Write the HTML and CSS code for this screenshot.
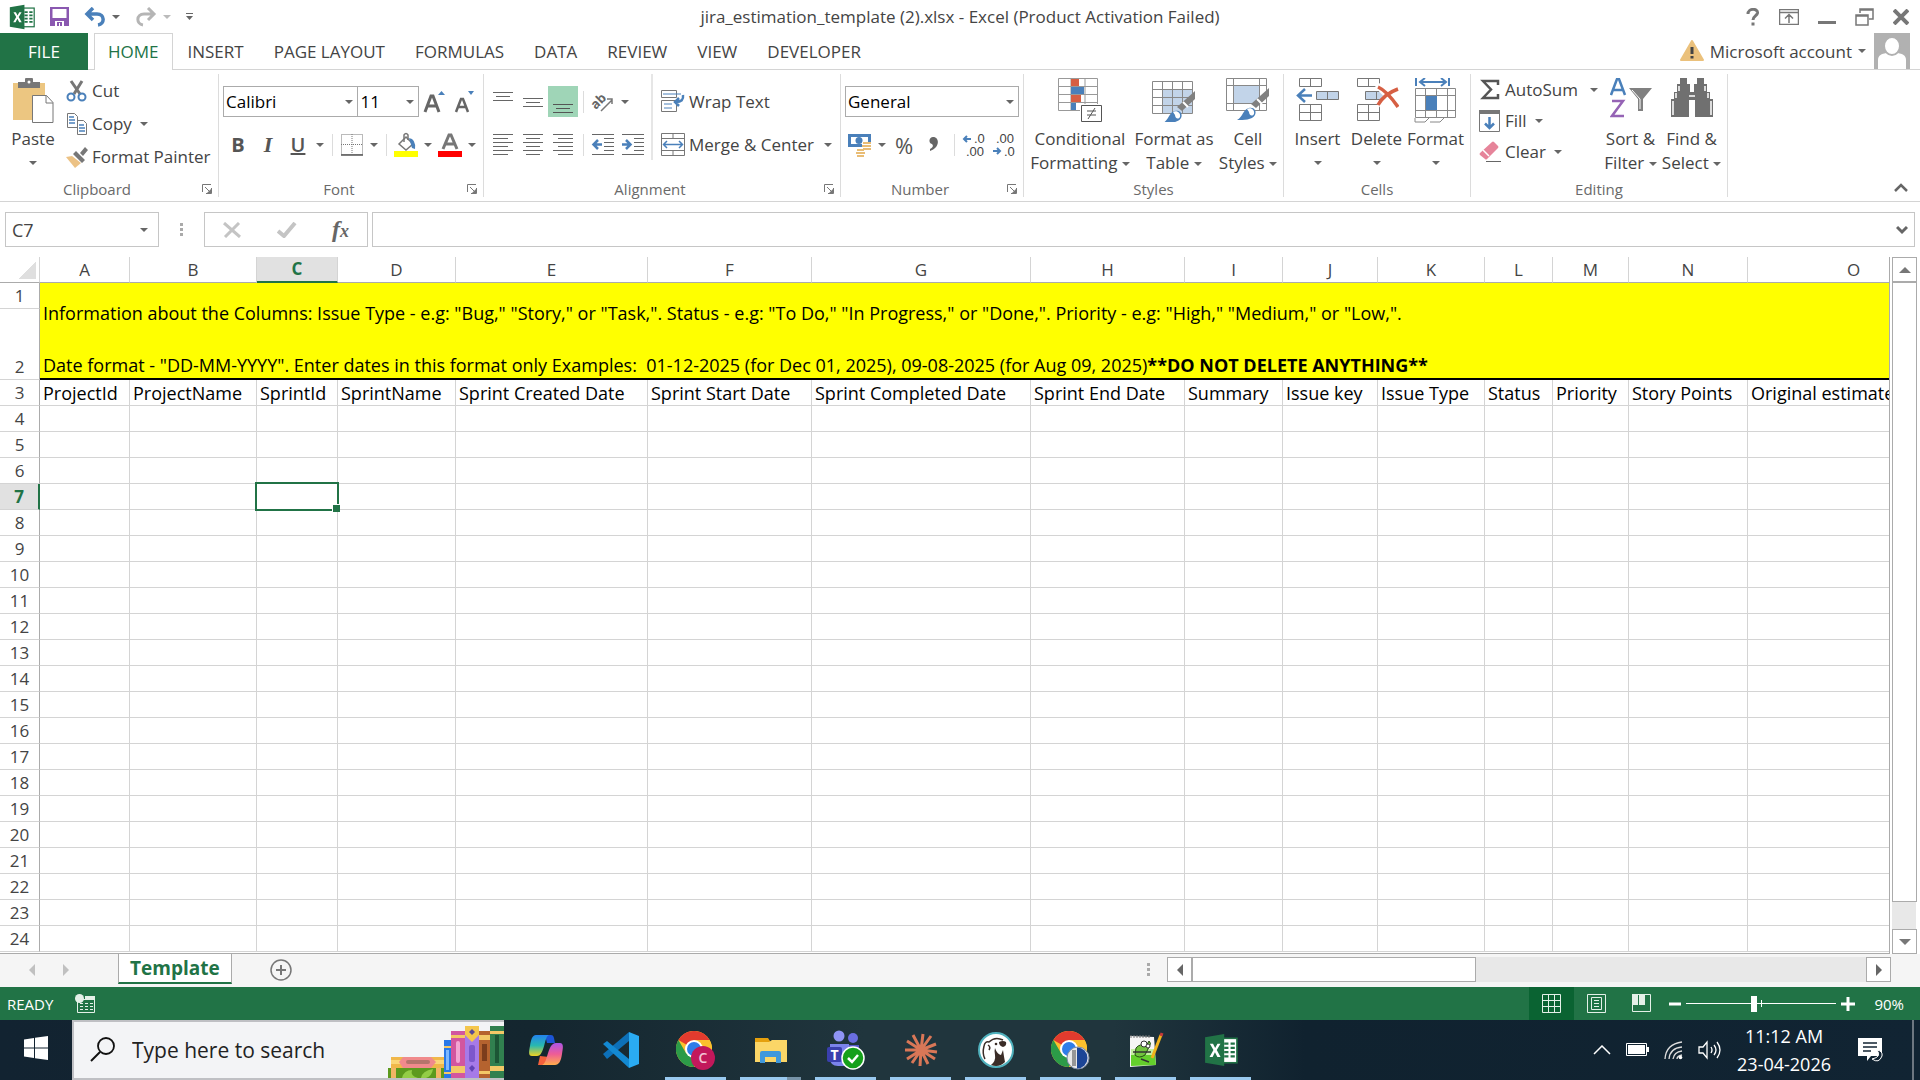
FILE: index.html
```html
<!DOCTYPE html>
<html lang="en">
<head>
    <meta charset="UTF-8">
    <meta name="viewport" content="width=device-width, initial-scale=1.0">
    <title>jira_estimation_template (2).xlsx - Excel</title>
    <link rel="stylesheet" href="styles.css">
</head>
<body>
    <!-- shared icons -->
    <svg class="sprite" aria-hidden="true">
        <symbol id="excel" viewBox="0 0 32 32">
            <rect x="17" y="5" width="14" height="23" fill="#fff" stroke="#217346" stroke-width="1.5"/>
            <path d="M19 9h4v2h-4zM25 9h4v2h-4zM19 13h4v2h-4zM25 13h4v2h-4zM19 17h4v2h-4zM25 17h4v2h-4zM19 21h4v2h-4zM25 21h4v2h-4z" fill="#217346"/>
            <path d="M1 4 19 1v30L1 28z" fill="#217346"/>
            <path d="M5.500 10h3l2 4 2.200-4h2.800l-3.500 6 3.600 6.500h-3l-2.300-4.300-2.200 4.300H5.200l3.700-6.400z" fill="#fff"/>
        </symbol>
        <symbol id="chrome" viewBox="0 0 36 36">
            <circle cx="18" cy="18" r="18" fill="#fbc02d"/>
            <path d="M18 18 2.400 9A18 18 0 0 1 33.600 9z" fill="#e33b2e"/>
            <path d="M2.400 9A18 18 0 0 0 18 36l7.800-13.500L10.200 22.500z" fill="#2c9b48"/>
            <path d="M18 9h15.600A18 18 0 0 1 18 36l8-13.500z" fill="#fbc02d"/>
            <circle cx="18" cy="18" r="9" fill="#fff"/>
            <circle cx="18" cy="18" r="7" fill="#2f7de9"/>
        </symbol>
        <symbol id="launcher" viewBox="0 0 10 10">
            <path d="M.5 8V.5H9M3 3l5 5M9.500 4v5.500H4" fill="none" stroke="#777"/>
            <path d="M9 5v4H5z" fill="#777"/>
        </symbol>
        <symbol id="brush" viewBox="0 0 34 34">
            <path d="M33 1v8L20 21l-5-4z" fill="#808080"/>
            <path d="m21 12 5 5" stroke="#fff" stroke-width="2"/>
            <path d="M1 33c6-3 6-11 12-12 5-1 8 3 6 7-3 5-11 5-18 5z" fill="#4a80ba"/>
            <path d="M11 22c4-2 8 1 7 5-2 3-5 1-5-2z" fill="#fff"/>
        </symbol>
    </svg>

    <header class="title-bar">
        <div class="quick-access">
            <svg width="26" height="26"><use href="#excel"/></svg>
            <button aria-label="Save"><svg width="19" height="19" viewBox="0 0 19 19"><path d="M0 0h19v19H0z" fill="#8a58b0"/><path d="M2.500 2h14v9h-14zM5 14h9v5H5z" fill="#fff"/><path d="M7 15h5v4h-2v-3H9v3H7z" fill="#8a58b0"/></svg></button>
            <button aria-label="Undo"><svg width="22" height="20" viewBox="0 0 22 20"><path d="M3 7h10c8 0 8 10 1 11M9 1 3 7l6 6" fill="none" stroke="#4a80ba" stroke-width="3.500"/></svg><i class="caret"></i></button>
            <button aria-label="Redo" class="off"><svg width="22" height="20" viewBox="0 0 22 20"><path d="M19 7H9C1 7 1 17 8 18M13 1l6 6-6 6" fill="none" stroke="#b5b5b5" stroke-width="3"/></svg><i class="caret"></i></button>
            <button aria-label="Customize"><svg width="8" height="8"><path d="M0 0h7v1H0zM0 3h7L3.500 7z" fill="#666"/></svg></button>
        </div>
        <h1>jira_estimation_template (2).xlsx - Excel (Product Activation Failed)</h1>
        <div class="window-buttons">
            <button aria-label="Help"><svg width="14" height="18" viewBox="0 0 14 18"><path d="M2 6c0-6 10-6 9.500-1C11 8 7 8 7 12M7 14.500v3" fill="none" stroke="#777" stroke-width="3"/></svg></button>
            <button aria-label="Ribbon display"><svg width="20" height="16" viewBox="0 0 20 16"><path d="M.5.500h19v15H.5zM.5 3.500h19M10 14V6M6 9.500l4-4 4 4" fill="none" stroke="#777" stroke-width="1.500"/></svg></button>
            <button aria-label="Minimize"><svg width="18" height="18" viewBox="0 0 18 18"><path d="M0 13h18v3H0z" fill="#777"/></svg></button>
            <button aria-label="Restore"><svg width="19" height="18" viewBox="0 0 19 18"><path d="M5 5V1h13v10h-4M1 7h12v10H1zM1 8h12M5 2h13" fill="none" stroke="#777" stroke-width="1.500"/></svg></button>
            <button aria-label="Close"><svg width="16" height="16" viewBox="0 0 16 16"><path d="m1 1 14 14M15 1 1 15" stroke="#777" stroke-width="4"/></svg></button>
        </div>
    </header>

    <nav class="tabs">
        <a class="file" href="#">FILE</a>
        <a class="active" href="#">HOME</a>
        <a href="#">INSERT</a>
        <a href="#">PAGE LAYOUT</a>
        <a href="#">FORMULAS</a>
        <a href="#">DATA</a>
        <a href="#">REVIEW</a>
        <a href="#">VIEW</a>
        <a href="#">DEVELOPER</a>
        <button class="account">
            <svg width="24" height="22" viewBox="0 0 24 22"><path d="M12 1 23 20H1z" fill="#ebc17c" stroke="#ebc17c" stroke-width="2" stroke-linejoin="round"/><path d="M12 7v7M12 16v2.500" stroke="#444" stroke-width="3"/></svg>
            Microsoft account <i class="caret"></i>
            <svg class="avatar" width="36" height="36" viewBox="0 0 36 36"><path d="M0 0h36v36H0z" fill="#b1b1b1"/><path d="M4 36V27c0-5 4-6 8-7h12c4 1 8 2 8 7v9z" fill="#fff"/><ellipse cx="18" cy="13" rx="8" ry="9" fill="#fff" stroke="#b1b1b1" stroke-width="2"/></svg>
        </button>
    </nav>

    <div class="ribbon">
        <section class="group clipboard">
            <div class="group-body">
                <button class="big">
                    <svg width="42" height="46" viewBox="0 0 42 46"><path d="M1 5h32v37H1z" fill="#ecc681"/><path d="M6 4h7V1q0-1 1-1h6q1 0 1 1v3h7v6H6z" fill="#777"/><circle cx="17" cy="4" r="1.500" fill="#fff"/><path d="M20.500 17.500h14l6.500 7v20H20.500z" fill="#fff" stroke="#777"/><path d="M34 17.500V25h7" fill="none" stroke="#777"/></svg>
                    <span>Paste</span><i class="caret"></i>
                </button>
                <div class="rows">
                    <button><svg width="22" height="22" viewBox="0 0 22 22"><path d="m5 1 9 13M16 1 8 14" stroke="#777" stroke-width="3"/><g fill="none" stroke="#4a80ba" stroke-width="2"><circle cx="5" cy="17" r="3.500"/><circle cx="16" cy="17" r="3.500"/></g></svg>Cut</button>
                    <button><svg width="22" height="24" viewBox="0 0 22 24"><path d="M1.500 1.500h7l3 3v11h-10zM11.500 8.500h6l3 3v11h-9z" fill="#fff" stroke="#777"/><path d="M3 5h5M3 8h6M3 11h6M13 13h5M13 16h6M13 19h6" stroke="#4a80ba" stroke-width="1.500"/></svg>Copy <i class="caret"></i></button>
                    <button><svg width="22" height="22" viewBox="0 0 22 22"><path d="m0 11 6-1 9 7-6 5z" fill="#ecc285"/><path d="m7 8 3-3 9 9-3 3zM14 7l5-6 3 3-5 6z" fill="#777"/></svg>Format Painter</button>
                </div>
            </div>
            <footer><span>Clipboard</span><button aria-label="Clipboard options"><svg width="10" height="10"><use href="#launcher"/></svg></button></footer>
        </section>

        <section class="group font">
            <div class="group-body stack">
                <div class="tools">
                    <span class="combo face"><select aria-label="Font"><option>Calibri</option></select></span>
                    <span class="combo size"><select aria-label="Font size"><option>11</option></select></span>
                    <button aria-label="Grow font"><svg width="22" height="24" viewBox="0 0 22 24"><path d="m2 22 6-16h2l6 16M4.500 16h9" fill="none" stroke="#666" stroke-width="3"/><path d="M15 5h7l-3.500-4z" fill="#4a80ba"/></svg></button>
                    <button aria-label="Shrink font"><svg width="22" height="24" viewBox="0 0 22 24"><path d="m3 22 5-13h2l5 13M5 17h8" fill="none" stroke="#666" stroke-width="2.500"/><path d="M15 1h6l-3 4z" fill="#4a80ba"/></svg></button>
                </div>
                <div class="tools">
                    <button class="letter bold">B</button>
                    <button class="letter italic">I</button>
                    <button class="letter underline">U</button>
                    <button class="drop" aria-label="Underline styles"><i class="caret"></i></button>
                    <i class="sep"></i>
                    <button aria-label="Borders"><svg width="22" height="22" viewBox="0 0 22 22"><path d="M.5.500h21v20H.5zM11 0v20M0 10.500h21" fill="none" stroke="#777" stroke-dasharray="1 1"/><path d="M0 21h22" stroke="#555" stroke-width="1.500"/></svg></button>
                    <button class="drop" aria-label="Border styles"><i class="caret"></i></button>
                    <i class="sep"></i>
                    <button aria-label="Fill color"><svg width="24" height="24" viewBox="0 0 24 24"><path d="m5 11 7-7 7 7-7 6z" fill="#fff" stroke="#777" stroke-width="1.500"/><path d="M10 9V2q2-3 4 0v5" fill="none" stroke="#777" stroke-width="1.500"/><path d="M15 5q7 1 6 11l-3-1z" fill="#4a80ba"/><path d="M0 18h24v6H0z" fill="#ff0"/></svg></button>
                    <button class="drop" aria-label="Fill colors"><i class="caret"></i></button>
                    <button aria-label="Font color"><svg width="24" height="24" viewBox="0 0 24 24"><path d="m5 16 6-14h2l6 14M8 11h8" fill="none" stroke="#777" stroke-width="3"/><path d="M0 18h24v6H0z" fill="red"/></svg></button>
                    <button class="drop" aria-label="Font colors"><i class="caret"></i></button>
                </div>
            </div>
            <footer><span>Font</span><button aria-label="Font options"><svg width="10" height="10"><use href="#launcher"/></svg></button></footer>
        </section>

        <section class="group alignment">
            <div class="group-body">
                <div class="stack divided">
                    <div class="tools">
                        <button aria-label="Top align"><svg width="20" height="24"><path d="M0 2.500h20M3 6.500h14M0 10.500h20" stroke="#666"/></svg></button>
                        <button aria-label="Middle align"><svg width="20" height="24"><path d="M0 8.500h20M3 12.500h14M0 16.500h20" stroke="#666"/></svg></button>
                        <button aria-label="Bottom align" class="on"><svg width="20" height="24"><path d="M0 14.500h20M3 18.500h14M0 22.500h20" stroke="#555"/></svg></button>
                        <i class="sep"></i>
                        <button aria-label="Orientation"><svg width="22" height="22" viewBox="0 0 22 22"><text x="0" y="14" transform="rotate(-45 8 12)" class="ab">ab</text><path d="M9 20 20 9M15 8h5v5" fill="none" stroke="#777" stroke-width="1.500"/></svg></button>
                        <button class="drop" aria-label="Orientation menu"><i class="caret"></i></button>
                    </div>
                    <div class="tools">
                        <button aria-label="Align left"><svg width="20" height="22"><path d="M0 .500h20M0 4.500h15M0 8.500h20M0 12.500h15M0 16.500h20M0 20.500h15" stroke="#666"/></svg></button>
                        <button aria-label="Center"><svg width="20" height="22"><path d="M0 .500h20M3 4.500h14M0 8.500h20M3 12.500h14M0 16.500h20M3 20.500h14" stroke="#666"/></svg></button>
                        <button aria-label="Align right"><svg width="20" height="22"><path d="M0 .500h20M5 4.500h15M0 8.500h20M5 12.500h15M0 16.500h20M5 20.500h15" stroke="#666"/></svg></button>
                        <i class="sep"></i>
                        <button aria-label="Decrease indent"><svg width="22" height="22"><path d="M0 .500h22M12 4.500h10M12 8.500h10M12 12.500h10M12 16.500h10M0 20.500h22" stroke="#666"/><path d="M10 10.500H2M6 6l-4.500 4.500L6 15" fill="none" stroke="#4a80ba" stroke-width="2.500"/></svg></button>
                        <button aria-label="Increase indent"><svg width="22" height="22"><path d="M0 .500h22M12 4.500h10M12 8.500h10M12 12.500h10M12 16.500h10M0 20.500h22" stroke="#666"/><path d="M0 10.500h8M4 6l4.500 4.500L4 15" fill="none" stroke="#4a80ba" stroke-width="2.500"/></svg></button>
                    </div>
                </div>
                <div class="stack wide">
                    <button><svg width="24" height="23" viewBox="0 0 24 23"><path d="M.5.500h15v7H.5zM.5 10.500h15v11H.5z" fill="#fff" stroke="#777"/><path d="M2 4h18M3 14h8M3 18h8" stroke="#4a80ba"/><path d="M22 5q1 7-7 7M18 8l-4 4 4 4" fill="none" stroke="#4a80ba" stroke-width="2.500"/></svg>Wrap Text</button>
                    <button><svg width="24" height="24" viewBox="0 0 24 24"><path d="M.5.500h23v22H.5zM.5 5.500h23M.5 17.500h23M12 0v5M12 18v5" fill="none" stroke="#777"/><path d="M3 11.500h18M6 8l-3.500 3.500L6 15M18 8l3.500 3.500L18 15" fill="none" stroke="#4a80ba" stroke-width="1.500"/></svg>Merge &amp; Center <i class="caret"></i></button>
                </div>
            </div>
            <footer><span>Alignment</span><button aria-label="Alignment options"><svg width="10" height="10"><use href="#launcher"/></svg></button></footer>
        </section>

        <section class="group number">
            <div class="group-body stack">
                <div class="tools">
                    <span class="combo format"><select aria-label="Number format"><option>General</option></select></span>
                </div>
                <div class="tools">
                    <button aria-label="Accounting format"><svg width="24" height="24" viewBox="0 0 24 24"><path d="M0 1h23v13H0z" fill="#4a80ba"/><path d="M3 4h17v7H3z" fill="#fff"/><circle cx="11" cy="7.500" r="3.500" fill="#4a80ba"/><path d="M14 9h9v9h-6v6H8v-8h6z" fill="#fff"/><path d="M15 10h8M14 13h9M15 16h8M9 17h7M8 20h9M9 23h7" stroke="#e9bd76" stroke-width="2"/></svg></button>
                    <button class="drop" aria-label="Currencies"><i class="caret"></i></button>
                    <button class="letter percent">%</button>
                    <button aria-label="Comma style"><svg width="10" height="16" viewBox="0 0 10 16"><path d="M4 0c7 0 7 11-3 14v-2c4-2 3-4 2-5-4-1-3-7 1-7z" fill="#666"/></svg></button>
                    <i class="sep"></i>
                    <button aria-label="Increase decimal"><svg width="24" height="26" viewBox="0 0 24 26"><text x="12" y="11" class="dec">.0</text><text x="4" y="24" class="dec">.00</text><path d="M9 7H2M5 4 2 7l3 3" fill="none" stroke="#4a80ba" stroke-width="2"/></svg></button>
                    <button aria-label="Decrease decimal"><svg width="24" height="26" viewBox="0 0 24 26"><text x="4" y="11" class="dec">.00</text><text x="12" y="24" class="dec">.0</text><path d="M1 19h7M5 16l3 3-3 3" fill="none" stroke="#4a80ba" stroke-width="2"/></svg></button>
                </div>
            </div>
            <footer><span>Number</span><button aria-label="Number options"><svg width="10" height="10"><use href="#launcher"/></svg></button></footer>
        </section>

        <section class="group styles">
            <div class="group-body">
                <button class="big">
                    <svg width="44" height="44" viewBox="0 0 44 44"><path d="M.5.500h39v32H.5zM13 0v33M27 0v33M0 8.500h40M0 16.500h40M0 24.500h40" fill="#fff" stroke="#999"/><path d="M13 1h8v7h-8zM13 17h10v7H13z" fill="#d65f43"/><path d="M13 9h13v7H13zM13 25h5v7h-5z" fill="#4a80ba"/><path d="M22 26h22v18H22z" fill="#fff"/><path d="M23.500 27.500h20v16h-20zM29 33h9M29 37h9M37 30l-7 11" fill="none" stroke="#555"/></svg>
                    <span>Conditional</span><span>Formatting <i class="caret"></i></span>
                </button>
                <button class="big">
                    <svg width="44" height="44" viewBox="0 0 44 44"><path d="M.5 3.500h40v32H.5z" fill="#fff"/><path d="M11 12h30v23H11z" fill="#c2d4e9"/><path d="M.5 3.500h40v32H.5zM10.500 3v32M20.500 3v32M30.500 3v32M0 11.500h40M0 19.500h40M0 27.500h40" fill="none" stroke="#888"/><use href="#brush" x="10" y="12" width="34" height="34"/></svg>
                    <span>Format as</span><span>Table <i class="caret"></i></span>
                </button>
                <button class="big">
                    <svg width="44" height="44" viewBox="0 0 44 44"><path d="M.5.500h40v32H.5zM7.500 0v32M33.500 0v32M0 7.500h40M0 25.500h40" fill="#fff" stroke="#888"/><path d="M8 8h25v17H8z" fill="#c2d4e9"/><use href="#brush" x="10" y="9" width="34" height="34"/></svg>
                    <span>Cell</span><span>Styles <i class="caret"></i></span>
                </button>
            </div>
            <footer><span>Styles</span></footer>
        </section>

        <section class="group cells">
            <div class="group-body">
                <button class="big">
                    <svg width="44" height="44" viewBox="0 0 44 44"><path d="M3.500.500h22v8h-22zM14.500 0v8M3.500 26.500h22v16h-22zM14.500 26v16M3 34.500h22" fill="#fff" stroke="#777"/><path d="M20.500 13.500h22v8h-22zM31.500 13v8" fill="#c2d4e9" stroke="#777"/><path d="M16 17.500H2M9 11l-7 6.500L9 24" fill="none" stroke="#4a80ba" stroke-width="2.500"/></svg>
                    <span>Insert</span><i class="caret"></i>
                </button>
                <button class="big">
                    <svg width="44" height="44" viewBox="0 0 44 44"><path d="M2.500.500h22v8h-22zM13.500 0v8M2.500 26.500h22v16h-22zM13.500 26v16M2 34.500h22" fill="#fff" stroke="#777"/><path d="M10.500 13.500h18v8h-18zM21.500 13v8" fill="#c2d4e9" stroke="#777"/><path d="M22 7 43 29M43 11 23 27" stroke="#fff" stroke-width="6"/><path d="M23 9q9 4 20 20M43 11q-14 5-20 16" fill="none" stroke="#d65f43" stroke-width="3.500"/></svg>
                    <span>Delete</span><i class="caret"></i>
                </button>
                <button class="big">
                    <svg width="44" height="46" viewBox="0 0 44 46"><path d="M2 0v8M35 0v8M6 4h26M11 0 6 4l5 4M27 0l5 4-5 4" fill="none" stroke="#4a80ba" stroke-width="2"/><path d="M1.500 10.500h40v29h-40zM11.500 10v29M22.500 10v29M33.500 10v29M1 17.500h40M1 32.500h40M1 40v4h10l4-4M16 44h10l4-4" fill="none" stroke="#888"/><path d="M12 18h11v14H12z" fill="#4a80ba"/></svg>
                    <span>Format</span><i class="caret"></i>
                </button>
            </div>
            <footer><span>Cells</span></footer>
        </section>

        <section class="group editing">
            <div class="group-body">
                <div class="rows">
                    <button><svg width="22" height="22" viewBox="0 0 22 22"><path d="M19 6V2H4l8 8.500L4 19h15v-4" fill="none" stroke="#555" stroke-width="2.500"/></svg>AutoSum <i class="caret far"></i></button>
                    <button><svg width="22" height="22" viewBox="0 0 22 22"><path d="M.5.500h20v21H.5z" fill="#fff" stroke="#777"/><path d="M0 0h21v4H0z" fill="#777"/><path d="M10.500 7v11M6 13.500l4.500 4.500 4.500-4.500" fill="none" stroke="#4a80ba" stroke-width="2.500"/></svg>Fill <i class="caret"></i></button>
                    <button><svg width="22" height="22" viewBox="0 0 22 22"><path d="M13 1q1-1 2 0l4 4q1 1 0 2L8 18q-1 1-2 0l-5-4q-1-1 0-2z" fill="#e6849a"/><path d="m4 9 6 6" stroke="#fff" stroke-width="1.500"/><path d="M7 20.500h15" stroke="#666"/></svg>Clear <i class="caret"></i></button>
                </div>
                <button class="big">
                    <svg width="42" height="40" viewBox="0 0 42 40"><path d="m1 17 6-16h2l6 16M3.500 12h9" fill="none" stroke="#4a80ba" stroke-width="2.500"/><path d="M2 23h11L2 38h12" fill="none" stroke="#9563b5" stroke-width="2.500"/><path d="M19 10h23L33 21v12h-5V21z" fill="#808080"/><path d="m22 12 8 9v10" fill="none" stroke="#fff"/></svg>
                    <span>Sort &amp;</span><span>Filter <i class="caret"></i></span>
                </button>
                <button class="big">
                    <svg width="42" height="40" viewBox="0 0 42 40"><path d="M9 0h7v6h3v8h4V6h3V0h7v6h3v8h3v7h3v18H24V22h-6v17H0V21h3v-7h3V6h3z" fill="#707070"/><path d="M2 23v14M5 15v5M8 8v5M40 23v14M37 15v5M34 8v5M18 18h6" stroke="#fff" stroke-width="1.500"/></svg>
                    <span>Find &amp;</span><span>Select <i class="caret"></i></span>
                </button>
            </div>
            <footer><span>Editing</span></footer>
        </section>
        <button class="collapse" aria-label="Collapse the ribbon"><svg width="14" height="10" viewBox="0 0 14 10"><path d="m1 8 6-6 6 6" fill="none" stroke="#666" stroke-width="2.500"/></svg></button>
    </div>

    <div class="formula-bar">
        <div class="name-box"><input type="text" value="C7" aria-label="Name box"><i class="caret"></i></div>
        <i class="dots"></i>
        <div class="formula-buttons">
            <button aria-label="Cancel"><svg width="18" height="16" viewBox="0 0 18 16"><path d="m1 1 16 14M16 1 2 15" stroke="#c4c4c4" stroke-width="3"/></svg></button>
            <button aria-label="Enter"><svg width="20" height="16" viewBox="0 0 20 16"><path d="m1 9 6 5L18 1" fill="none" stroke="#c4c4c4" stroke-width="4"/></svg></button>
            <button class="fx" aria-label="Insert function">f<small>x</small></button>
        </div>
        <div class="formula-box"><input type="text" aria-label="Formula"><svg width="12" height="10" viewBox="0 0 12 10"><path d="m1 2 5 5 5-5" fill="none" stroke="#666" stroke-width="3"/></svg></div>
    </div>

    <main class="workspace">
        <div class="sheet">
            <table>
                <colgroup>
                    <col class="w-head"><col class="w-a"><col class="w-b"><col class="w-c"><col class="w-d"><col class="w-e"><col class="w-f"><col class="w-g"><col class="w-h"><col class="w-i"><col class="w-j"><col class="w-k"><col class="w-l"><col class="w-m"><col class="w-n"><col class="w-o">
                </colgroup>
                <thead>
                    <tr><th class="corner"></th><th>A</th><th>B</th><th class="current">C</th><th>D</th><th>E</th><th>F</th><th>G</th><th>H</th><th>I</th><th>J</th><th>K</th><th>L</th><th>M</th><th>N</th><th>O</th></tr>
                </thead>
                <tbody id="rows">
                    <tr>
                        <th>1</th>
                        <td class="note" colspan="15" rowspan="2">Information about the Columns: Issue Type - e.g: "Bug," "Story," or "Task,". Status - e.g: "To Do," "In Progress," or "Done,". Priority - e.g: "High," "Medium," or "Low,".<br><br>Date format - "DD-MM-YYYY". Enter dates in this format only Examples:&nbsp; 01-12-2025 (for Dec 01, 2025), 09-08-2025 (for Aug 09, 2025)<b>**DO NOT DELETE ANYTHING**</b></td>
                    </tr>
                    <tr class="tall"><th>2</th></tr>
                    <tr><th>3</th><td>ProjectId</td><td>ProjectName</td><td>SprintId</td><td>SprintName</td><td>Sprint Created Date</td><td>Sprint Start Date</td><td>Sprint Completed Date</td><td>Sprint End Date</td><td>Summary</td><td>Issue key</td><td>Issue Type</td><td>Status</td><td>Priority</td><td>Story Points</td><td>Original estimate</td></tr>
                </tbody>
            </table>
        </div>
        <div class="scroll-y">
            <button aria-label="Scroll up"><i class="tri up"></i></button>
            <div class="thumb"></div>
            <button aria-label="Scroll down"><i class="tri down"></i></button>
        </div>
    </main>

    <div class="sheet-bar">
        <div class="sheet-nav"><button aria-label="Previous sheet"><i class="tri left"></i></button><button aria-label="Next sheet"><i class="tri right"></i></button></div>
        <a class="sheet-tab" href="#">Template</a>
        <button class="add" aria-label="New sheet"><svg width="22" height="22" viewBox="0 0 22 22"><circle cx="11" cy="11" r="10" fill="none" stroke="#777" stroke-width="1.500"/><path d="M11 6v10M6 11h10" stroke="#777" stroke-width="2"/></svg></button>
        <i class="dots"></i>
        <div class="scroll-x">
            <button aria-label="Scroll left"><i class="tri left"></i></button>
            <div class="thumb"></div>
            <button aria-label="Scroll right"><i class="tri right"></i></button>
        </div>
    </div>

    <div class="status-bar">
        <span>READY</span>
        <svg width="20" height="20" viewBox="0 0 20 20"><path d="M2.500 5.500h17v13h-17z" fill="none" stroke="#e4f0e8"/><path d="M10 2h10v4H10zM5 9h3v1H5zM10 9h3v1h-3zM15 9h3v1h-3zM5 12h3v1H5zM10 12h3v1h-3zM15 12h3v1h-3zM5 15h3v1H5zM10 15h3v1h-3zM15 15h3v1h-3z" fill="#e4f0e8"/><circle cx="4.500" cy="4.500" r="4.500" fill="#e4f0e8"/></svg>
        <div class="views">
            <button class="on" aria-label="Normal view"><svg width="20" height="20"><path d="M.5.500h18v18H.5zM6.500 0v19M12.500 0v19M0 6.500h19M0 12.500h19" fill="none" stroke="#e4f0e8"/></svg></button>
            <button aria-label="Page layout view"><svg width="20" height="20"><path d="M.5.500h18v18H.5zM4.500 3.500h10v12h-10zM7 6.500h5M7 9.500h5M7 12.500h5" fill="none" stroke="#e4f0e8"/></svg></button>
            <button aria-label="Page break view"><svg width="20" height="20"><path d="M.5.500h18v17H.5z" fill="none" stroke="#e4f0e8"/><path d="M0 0h6v11H0zM7 0h6v11H7z" fill="#e4f0e8"/></svg></button>
        </div>
        <button class="zoom-step" aria-label="Zoom out"><svg width="12" height="14"><path d="M0 7h12" stroke="#fff" stroke-width="3"/></svg></button>
        <input type="range" min="0" max="100" value="45" aria-label="Zoom">
        <button class="zoom-step" aria-label="Zoom in"><svg width="14" height="14"><path d="M0 7h14M7 0v14" stroke="#fff" stroke-width="3"/></svg></button>
        <span class="zoom">90%</span>
    </div>

    <footer class="taskbar">
        <button class="start" aria-label="Start"><svg width="24" height="24" viewBox="0 0 24 24"><path d="m0 3.400 10-1.400v9.500H0zM11 1.800 24 0v11.500H11zM0 12.500h10V22L0 20.600zM11 12.500h13V24l-13-1.800z" fill="#fff"/></svg></button>
        <div class="search">
            <svg width="26" height="26" viewBox="0 0 26 26"><circle cx="16" cy="9" r="8" fill="none" stroke="#111" stroke-width="1.800"/><path d="M10 15 1 24" stroke="#111" stroke-width="2"/></svg>
            <input type="text" placeholder="Type here to search" aria-label="Search">
            <svg class="books" width="116" height="52" viewBox="0 0 116 52">
                <path d="M3 31h53v11H3z" fill="#f0b74a"/><path d="M3 34h53v4H3z" fill="#fad678"/><path d="M15 31h28l5 5-5 6H15l-4-6z" fill="#f08a8c"/><rect x="18" y="34" width="24" height="4" rx="2" fill="#b5746c"/>
                <path d="M0 42h56v10H0z" fill="#5c9a1e"/><path d="M14 52q2-8 10-8-2 6 6 8zM33 52q1-7 12-9-1 7-7 9z" fill="#93cd47"/><path d="M3 42h5v10H3zM48 42h5v10h-5z" fill="#f2b565"/>
                <path d="M56 14h7v38h-7z" fill="#2878e8"/><path d="M56 20h7v2h-7zM56 46h7v2h-7z" fill="#f3c867"/><path d="M58 24h3v20h-3z" fill="#7db8ff"/>
                <path d="M63 5h14v47H63z" fill="#d2569f"/><path d="M63 9h14v3H63zM63 40h14v7H63z" fill="#f3c867"/><rect x="68" y="15" width="4" height="22" rx="2" fill="#f2a6d2"/>
                <path d="M77 0h14v52H77z" fill="#a67ae8"/><path d="M77 0h14v9l-7 7-7-7z" fill="#f4c64c"/><path d="m84 3 3 3-3 3-3-3z" fill="#5a4a96"/><rect x="81" y="19" width="6" height="17" rx="2" fill="#7d57cc"/><path d="m84 39 3 3-3 4-3-4z" fill="#6243b4"/>
                <path d="M91 5h11v47H91z" fill="#b5632f"/><path d="M91 9h11v5H91zM91 45h11v3H91z" fill="#f3c867"/><path d="M94 18h5v17h-5z" fill="#7c3d1c"/>
                <path d="M102 0h14v52h-14z" fill="#31804f"/><path d="M102 5h14v3h-14zM102 40h14v5h-14z" fill="#f3c867"/><path d="M107 9h4v28h-4z" fill="#1c5635"/>
            </svg>
        </div>
        <div class="apps">
            <button aria-label="Copilot"><svg width="36" height="36" viewBox="0 0 36 36">
                <defs>
                    <linearGradient id="cp1" x2="0" y2="1"><stop offset="0" stop-color="#2383ee"/><stop offset=".5" stop-color="#28b8b0"/><stop offset="1" stop-color="#f0d422"/></linearGradient>
                    <linearGradient id="cp2" x2="0" y2="1"><stop offset="0" stop-color="#ad55e8"/><stop offset=".5" stop-color="#ee5c96"/><stop offset="1" stop-color="#ffad4c"/></linearGradient>
                </defs>
                <path d="M17 3h6c3 0 3 3 4 8h-8z" fill="#1c55d6"/><path d="M10 33h7c3 0 3-5 4-8l-9-1z" fill="#f3603c"/>
                <path d="M8 3h13c-5 1-4 21-12 21H4c-4 0-3-5-2-10C3 8 4 3 8 3z" fill="url(#cp1)"/><path d="M28 11h4c4 0 3 5 2 11-1 7-3 11-7 11H14c6-1 5-22 14-22z" fill="url(#cp2)"/></svg></button>
            <button aria-label="Visual Studio Code"><svg width="36" height="36" viewBox="0 0 36 36"><path d="m0 22 26-22v9L4 27z" fill="#0d70b8"/><path d="m0 12 4-3 22 18v9z" fill="#1389d2"/><path d="m26 0 10 4v28l-10 4z" fill="#2aabf2"/></svg></button>
            <button class="open" aria-label="Chrome"><svg width="40" height="40" viewBox="0 0 40 40"><use href="#chrome" width="36" height="36" x="0" y="1"/><circle cx="27" cy="28" r="12" fill="#c2185b"/><text x="27" y="33" class="badge-c">C</text></svg></button>
            <button class="open split" aria-label="File Explorer"><svg width="36" height="36" viewBox="0 0 36 36"><path d="M2 6h13l2 3v4H2z" fill="#e5a00d"/><path d="M2 10h14l3-2h15v22H2z" fill="#fbd667"/><path d="M7 31V21q0-2 2-2h17q2 0 2 2v10h-5v-6H12v6z" fill="#3f98dc"/></svg></button>
            <button class="open" aria-label="Teams"><svg width="40" height="40" viewBox="0 0 40 40"><circle cx="13" cy="6" r="5.500" fill="#8f94f4"/><circle cx="27" cy="8" r="5" fill="#6a6ee0"/><path d="M4 14h19v22H12q-8 0-8-8z" fill="#7b83eb"/><path d="M23 15h10v15H23z" fill="#5558c8"/><rect x="1" y="17" width="15" height="15" rx="2" fill="#3a3fae"/><text x="8.500" y="30" class="badge-t">T</text><circle cx="27" cy="28" r="11" fill="#16a01b" stroke="#fff" stroke-width="1.500"/><path d="m22 28 4 4 6-7" fill="none" stroke="#fff" stroke-width="2.500"/></svg></button>
            <button class="open" aria-label="Claude"><svg width="34" height="34" viewBox="0 0 34 34"><path d="M17 17 9 2M17 17 19 1M17 17 27 3M17 17 32 11M17 17 33 19M17 17 31 26M17 17 24 31M17 17 16 33M17 17 8 30M17 17 3 26M17 17 1 17M17 17 3 8" stroke="#d97757" stroke-width="3"/></svg></button>
            <button class="open" aria-label="DBeaver"><svg width="36" height="36" viewBox="0 0 36 36"><circle cx="18" cy="18" r="17" fill="#fff" stroke="#50b1bd" stroke-width="2"/><path d="M6 14q1-5 5-4 6-6 14-2M6 14q-2 8 1 13M10 13q3 2 1 5" fill="none" stroke="#3a2c27" stroke-width="1.500"/><path d="M21 10q4-2 7 0 1 4-3 5-4-1-4-5z" fill="#3a2c27"/><circle cx="18" cy="12" r="1.300" fill="#3a2c27"/><path d="M13 33q5-4 4-10-1-4 0-7 2 6 6 7l2-5q1 7 2 12-6 6-14 3z" fill="#3a2c27"/></svg></button>
            <button class="open" aria-label="Chrome work profile"><svg width="40" height="40" viewBox="0 0 40 40"><use href="#chrome" width="36" height="36" x="0" y="1"/><circle cx="27" cy="28" r="11" fill="#e8e8e8" stroke="#7b8aa5"/><path d="M26 17.500a10.500 10.500 0 0 1 0 21z" fill="#1c4596"/><path d="M22 20v16M24 20v16" stroke="#444"/></svg></button>
            <button class="open" aria-label="Notepad++"><svg width="36" height="36" viewBox="0 0 36 36"><path d="m2 4 24 1 2 28-26 2z" fill="#f5f5f5"/><path d="M3 23h24l1 10-25 1z" fill="#64cf2c"/><path d="M3 17h23l1 6H3z" fill="#c4efa0"/><path d="M3 3v3M6 3v3M9 3v3M12 3v3M15 3v3M18 3v3M21 3v3" stroke="#777"/><path d="M8 16q4-5 10-2l3-5q3 2 0 6l-4 8q-6 4-10 0z" fill="#72c33f" stroke="#244b12"/><circle cx="16" cy="12" r="3" fill="#fff" stroke="#333"/><circle cx="20" cy="14" r="2" fill="#fff" stroke="#333"/><path d="M5 20h18M13 27l8 3" stroke="#333" stroke-width="1.500"/><path d="M33 3 24 26" stroke="#f1b31c" stroke-width="3"/><path d="m34 1-1 3" stroke="#c53a3a" stroke-width="3"/></svg></button>
            <button class="open" aria-label="Excel"><svg width="34" height="34"><use href="#excel"/></svg></button>
        </div>
        <div class="tray">
            <button aria-label="Hidden icons"><svg width="18" height="10"><path d="m1 9 8-8 8 8" fill="none" stroke="#fff" stroke-width="1.500"/></svg></button>
            <button aria-label="Battery"><svg width="23" height="14"><path d="M.5.500h20v12H.5z" fill="none" stroke="#fff"/><path d="M2 2h17v9H2zM21 4h2v5h-2z" fill="#fff"/></svg></button>
            <button aria-label="Wi-Fi"><svg width="19" height="19"><g fill="none" stroke="#ddd" stroke-width="1.300"><path d="M1 18Q2 3 18 1M5 18Q6 7 18 6M9 18Q10 11 18 10M13 18q0-3 5-4"/></g><circle cx="16.500" cy="16.500" r="1.800" fill="#fff"/></svg></button>
            <button aria-label="Volume"><svg width="24" height="20"><path d="M1 7h4l4-5v16l-4-5H1zM13 7q2 3 0 6M16 5q4 5 0 10M19 2q6 8 0 16" fill="none" stroke="#fff" stroke-width="1.300"/></svg></button>
            <button class="clock"><time>11:12 AM</time><time>23-04-2026</time></button>
            <button aria-label="Notifications"><svg width="26" height="26" viewBox="0 0 26 26"><path d="M0 1h24v18H13l-4 5v-5H0z" fill="#fff"/><path d="M5 6h14M5 10h14M5 14h8" stroke="#132433" stroke-width="1.500"/><path d="M19 13q5 7-5 9 7 5 10-3 1-5-5-6z" fill="#132433" stroke="#fff"/></svg></button>
        </div>
        <button class="show-desktop" aria-label="Show desktop"></button>
    </footer>

    <script>
        // fill the rest of the sheet with empty rows
        const rows = document.getElementById('rows');
        for (let r = 4; r <= 24; r++) {
            const tr = document.createElement('tr');
            const th = document.createElement('th');
            th.textContent = r;
            if (r === 7) th.className = 'current';
            tr.appendChild(th);
            for (let c = 0; c < 15; c++) {
                const td = document.createElement('td');
                if (r === 7 && c === 2) td.className = 'selected';
                tr.appendChild(td);
            }
            rows.appendChild(tr);
        }
    </script>
</body>
</html>
```
FILE: styles.css
```css
* {
    box-sizing: border-box;
}
body {
    margin: 0;
    height: 100vh;
    display: flex;
    flex-direction: column;
    overflow: hidden;
    background: #fff;
    color: #444;
    font-family: 'Open Sans', 'Noto Sans', sans-serif;
    font-size: 17px;
}
button, input, select {
    font: inherit;
    color: inherit;
    background: none;
    border: 0;
    border-radius: 0;
    padding: 0;
    margin: 0;
    outline: 0;
}
a {
    color: inherit;
    text-decoration: none;
}
svg {
    flex: none;
}
.sprite {
    position: absolute;
    width: 0;
    height: 0;
}
.caret {
    display: inline-block;
    flex: none;
    border: 4px solid transparent;
    border-top-color: #666;
    border-bottom: 0;
    vertical-align: middle;
}
.tri {
    display: block;
    border: 6px solid transparent;
}
.tri.up { border-bottom-color: #777; border-top: 0; }
.tri.down { border-top-color: #777; border-bottom: 0; }
.tri.left { border-right-color: #666; border-left: 0; }
.tri.right { border-left-color: #666; border-right: 0; }
.dots {
    width: 3px;
    height: 13px;
    background: repeating-linear-gradient(#aaa 0 3px, transparent 3px 5px);
}

/* title bar */
.title-bar {
    flex: none;
    display: grid;
    grid-template-columns: 1fr auto 1fr;
    align-items: center;
    height: 33px;
}
.title-bar h1 {
    margin: 0;
    font-size: 17px;
    line-height: 24px;
    font-weight: normal;
}
.quick-access {
    display: flex;
    align-items: center;
    gap: 15px;
    padding-left: 9px;
}
.quick-access button {
    display: flex;
    align-items: center;
    gap: 6px;
}
.off .caret {
    border-top-color: #bbb;
}
.window-buttons {
    display: flex;
    align-items: center;
    justify-content: flex-end;
    gap: 19px;
    padding-right: 11px;
}
.window-buttons button {
    display: flex;
}

/* tabs */
.tabs {
    flex: none;
    display: flex;
    height: 37px;
    line-height: 37px;
    border-bottom: 1px solid #d4d4d4;
}
.tabs a {
    padding: 0 15px;
    white-space: nowrap;
}
.tabs .file {
    width: 88px;
    height: 37px;
    margin-right: 6px;
    background: #217346;
    color: #fff;
    text-align: center;
}
.tabs .active {
    height: 37px;
    padding: 0 13px;
    line-height: 35px;
    background: #fff;
    border: 1px solid #d4d4d4;
    border-bottom: 0;
    color: #217346;
}
.account {
    display: flex;
    align-items: center;
    gap: 6px;
    height: 36px;
    margin-left: auto;
    padding-right: 10px;
}
.avatar {
    margin-left: 2px;
}

/* ribbon */
.ribbon {
    flex: none;
    display: flex;
    height: 132px;
    padding: 4px 0;
    border-bottom: 1px solid #d4d4d4;
}
.group {
    flex: none;
    display: flex;
    flex-direction: column;
    border-right: 1px solid #dcdcdc;
    white-space: nowrap;
}
.clipboard { width: 219px; }
.font { width: 265px; }
.alignment { width: 357px; }
.number { width: 183px; }
.styles { width: 260px; }
.cells { width: 187px; }
.editing { width: 257px; }
.group-body {
    flex: 1;
    display: flex;
    padding: 0 4px;
}
.group footer {
    display: flex;
    align-items: center;
    height: 20px;
    padding-top: 4px;
    font-size: 15px;
    line-height: 24px;
    color: #6a6a6a;
}
.group footer span {
    flex: 1;
    text-align: center;
}
.group footer button {
    display: flex;
    justify-content: flex-end;
    width: 24px;
    padding-right: 6px;
}
.big {
    flex: none;
    display: flex;
    flex-direction: column;
    align-items: center;
    height: 101px;
    padding-top: 4px;
    line-height: 24px;
}
.big svg {
    margin-bottom: auto;
}
.big > .caret {
    margin: 10px 0;
}
.clipboard .big { width: 50px; }
.clipboard .group-body {
    gap: 8px;
    padding-left: 8px;
}
.styles .big:nth-child(1) { width: 104px; }
.styles .big:nth-child(2) { width: 84px; }
.styles .big:nth-child(3) { width: 64px; }
.cells .big { width: 59px; }
.editing .big { width: 61px; }
.rows {
    display: flex;
    flex-direction: column;
}
.rows button {
    display: flex;
    align-items: center;
    gap: 4px;
    height: 33px;
}
.rows .caret {
    margin-left: 4px;
}
.editing .group-body {
    padding-left: 8px;
}
.editing .rows {
    width: 121px;
}
.editing .rows button {
    height: 31px;
}
.editing .rows .far {
    margin-left: 8px;
}
.stack {
    display: flex;
    flex-direction: column;
    padding-top: 12px;
    gap: 12px;
}
.tools {
    display: flex;
    align-items: center;
    height: 31px;
}
.tools button {
    display: flex;
    align-items: center;
    justify-content: center;
    width: 30px;
    height: 31px;
}
.tools svg {
    overflow: visible;
}
.tools .drop {
    width: 14px;
}
.tools .on {
    background: #9fd5b7;
}
.sep {
    width: 1px;
    height: 22px;
    margin: 0 4px 0 5px;
    background: #dcdcdc;
}
.divided {
    width: 163px;
}
.wide {
    border-left: 2px solid #e6e6e6;
    height: 86px;
    padding-left: 8px;
}
.wide button {
    display: flex;
    align-items: center;
    gap: 4px;
    height: 31px;
}
.wide .caret {
    margin-left: 6px;
}
.letter {
    font-size: 20px;
    color: #555;
}
.bold { font-weight: bold; }
.italic { font: italic bold 22px 'Liberation Serif', serif; }
.underline { text-decoration: underline; font-weight: 600; }
.percent { font-size: 22px; }
.ab {
    font: bold 13px 'Open Sans', sans-serif;
    fill: #666;
}
.dec {
    font: 13px 'Liberation Sans', sans-serif;
    fill: #444;
}
.combo {
    position: relative;
    height: 31px;
    color: #000;
    border: 1px solid #ababab;
}
.combo::after {
    content: '';
    position: absolute;
    right: 4px;
    top: 13px;
    border: 4px solid transparent;
    border-top-color: #666;
    border-bottom: 0;
}
.combo select {
    appearance: none;
    width: 100%;
    height: 29px;
    padding-left: 2px;
}
.face { width: 136px; }
.size { width: 61px; border-left: 0; }
.format { width: 174px; }
.collapse {
    margin: auto 12px 4px auto;
    display: flex;
}

/* formula bar */
.formula-bar {
    flex: none;
    display: flex;
    align-items: center;
    height: 55px;
    padding: 10px 5px;
}
.name-box, .formula-buttons, .formula-box {
    display: flex;
    align-items: center;
    height: 35px;
    border: 1px solid #c6c6c6;
}
.name-box {
    width: 154px;
    padding: 0 10px 0 6px;
    font-size: 18px;
}
.name-box input {
    width: 100%;
    flex: 1;
}
.formula-bar .dots {
    margin: 0 21px;
}
.formula-buttons {
    width: 164px;
    justify-content: space-between;
    padding: 0 18px;
    margin-right: 4px;
}
.formula-buttons button {
    display: flex;
}
.formula-buttons .fx {
    display: block;
    font: italic bold 24px/30px 'Liberation Serif', serif;
    color: #666;
}
.fx small {
    font-size: 18px;
}
.formula-box {
    flex: 1;
    padding-right: 6px;
}
.formula-box input {
    flex: 1;
}

/* sheet */
.workspace {
    flex: 1;
    min-height: 0;
    display: flex;
    background: #fff;
}
.sheet {
    flex: 1;
    min-width: 0;
    overflow: hidden;
    border-right: 1px solid #ababab;
    border-bottom: 1px solid #ababab;
}
table {
    table-layout: fixed;
    width: 1959px;
    border-collapse: separate;
    border-spacing: 0;
    line-height: 24px;
}
.w-head { width: 40px; }
.w-a { width: 90px; }
.w-b { width: 127px; }
.w-c { width: 81px; }
.w-d { width: 118px; }
.w-e { width: 192px; }
.w-f { width: 164px; }
.w-g { width: 219px; }
.w-h { width: 154px; }
.w-i { width: 98px; }
.w-j { width: 95px; }
.w-k { width: 107px; }
.w-l { width: 68px; }
.w-m { width: 76px; }
.w-n { width: 119px; }
.w-o { width: 212px; }
th, td {
    height: 26px;
    padding: 0;
    border: solid #d4d4d4;
    border-width: 0 1px 1px 0;
    white-space: nowrap;
}
th {
    font-weight: normal;
    text-align: center;
    vertical-align: bottom;
}
tbody th {
    border-right-color: #ababab;
}
thead th {
    border-bottom-color: #ababab;
    background: #fff;
}
td {
    padding-left: 3px;
    color: #000;
    font-size: 18px;
    overflow: hidden;
}
.tall th {
    height: 71px;
}
.note {
    vertical-align: bottom;
    background: #ff0;
    border-bottom: 2px solid #000;
    line-height: 26px;
}
.corner {
    background: linear-gradient(135deg, transparent 50%, #dfdfdf 50%) 18px 4px / 18px 18px no-repeat;
}
.current {
    background: #e1e1e1;
    color: #217346;
    font-weight: bold;
}
thead .current {
    background: #e1e1e1;
    border-bottom: 2px solid #217346;
}
tbody .current {
    border-right: 2px solid #217346;
}
.selected {
    position: relative;
    overflow: visible;
}
.selected::before {
    content: '';
    position: absolute;
    inset: -2px;
    border: 2px solid #217346;
}
.selected::after {
    content: '';
    position: absolute;
    right: -3px;
    bottom: -3px;
    width: 7px;
    height: 7px;
    background: #217346;
    border: solid #fff;
    border-width: 1px 0 0 1px;
}
.scroll-y {
    width: 30px;
    padding: 0 4px 0 2px;
    display: flex;
    flex-direction: column;
    background: linear-gradient(#e8e8e8, #e8e8e8) 2px 0 / 24px 100% no-repeat;
}
.scroll-y button, .scroll-x button {
    display: flex;
    align-items: center;
    justify-content: center;
    width: 25px;
    height: 25px;
    background: #fff;
    border: 1px solid #ababab;
}
.thumb {
    background: #fff;
    border: 1px solid #ababab;
}
.scroll-y .thumb {
    width: 25px;
    height: 89%;
    margin-bottom: auto;
}

/* sheet tabs */
.sheet-bar {
    flex: none;
    display: flex;
    align-items: center;
    height: 33px;
    padding: 0 29px 2px 0;
    background: #f5f5f5;
}
.sheet-nav {
    display: flex;
    gap: 28px;
    width: 118px;
    padding-left: 29px;
}
.sheet-nav .left { border-right-color: #c0c0c0; }
.sheet-nav .right { border-left-color: #c0c0c0; }
.sheet-tab {
    align-self: flex-start;
    height: 30px;
    padding: 0 11px;
    line-height: 28px;
    background: #fff;
    color: #217346;
    font-size: 19px;
    font-weight: bold;
    border: solid #ababab;
    border-width: 0 1px;
    border-bottom: 2px solid #217346;
}
.add {
    display: flex;
    margin-left: 38px;
}
.sheet-bar .dots {
    margin-left: auto;
    margin-right: 17px;
}
.scroll-x {
    display: flex;
    width: 724px;
    background: #e8e8e8;
}
.scroll-x .thumb {
    width: 284px;
    margin-right: auto;
}

/* status bar */
.status-bar {
    flex: none;
    display: flex;
    align-items: center;
    height: 33px;
    padding: 0 16px 0 7px;
    background: #217346;
    color: #fff;
    font-size: 15px;
}
.status-bar > svg {
    margin-left: 22px;
}
.views {
    display: flex;
    margin-left: auto;
}
.views button {
    display: flex;
    align-items: center;
    justify-content: center;
    width: 45px;
    height: 33px;
}
.views .on {
    background: #0a6332;
}
.zoom-step {
    display: flex;
}
.views + .zoom-step {
    margin-left: 5px;
}
.status-bar input {
    appearance: none;
    width: 150px;
    height: 20px;
    margin: 0 5px;
    background: linear-gradient(#fff, #fff) 0 9px / 100% 1px no-repeat, linear-gradient(#fff, #fff) 50% 6px / 1px 7px no-repeat;
}
.status-bar input::-webkit-slider-thumb {
    appearance: none;
    width: 6px;
    height: 16px;
    background: #fff;
}
.zoom {
    width: 49px;
    text-align: right;
}

/* taskbar */
.taskbar {
    flex: none;
    display: flex;
    height: 60px;
    background: linear-gradient(90deg, #122331 0, #14262f 28%, #20353d 45%, #20353d 58%, #10222f 68%, #112433 100%);
    color: #fff;
}
.start {
    width: 72px;
}
.search {
    display: flex;
    align-items: center;
    width: 432px;
    padding-left: 16px;
    background: #f3f4f6;
    border: 2px solid #bfc0c4;
    border-right: 0;
}
.search input {
    flex: 1;
    width: 100px;
    padding-left: 16px;
    font-size: 21px;
    color: #222;
}
.search input::placeholder {
    color: #222;
    opacity: 1;
}
.books {
    align-self: flex-end;
}
.apps {
    display: flex;
    gap: 14px;
    padding-left: 11px;
}
.apps button {
    display: flex;
    align-items: center;
    justify-content: center;
    width: 61px;
    border-top: 3px solid transparent;
    border-bottom: 3px solid transparent;
}
.apps .open {
    border-bottom-color: #99c9ef;
}
.apps .split {
    border-image: linear-gradient(90deg, #99c9ef 77%, #7793a8 77%) 0 0 3 0;
}
.badge-c {
    font: 600 14px 'Open Sans', sans-serif;
    fill: #f2c4d5;
    text-anchor: middle;
}
.badge-t {
    font: bold 14px 'Open Sans', sans-serif;
    fill: #fff;
    text-anchor: middle;
}
.tray {
    display: flex;
    align-items: center;
    gap: 15px;
    margin-left: auto;
    padding-right: 28px;
}
.tray button {
    display: flex;
}
.tray .clock {
    flex-direction: column;
    align-items: center;
    margin-right: 12px;
    font-size: 18px;
    line-height: 28px;
}
.show-desktop {
    width: 8px;
    border-left: 2px solid #6d7781;
}
```
